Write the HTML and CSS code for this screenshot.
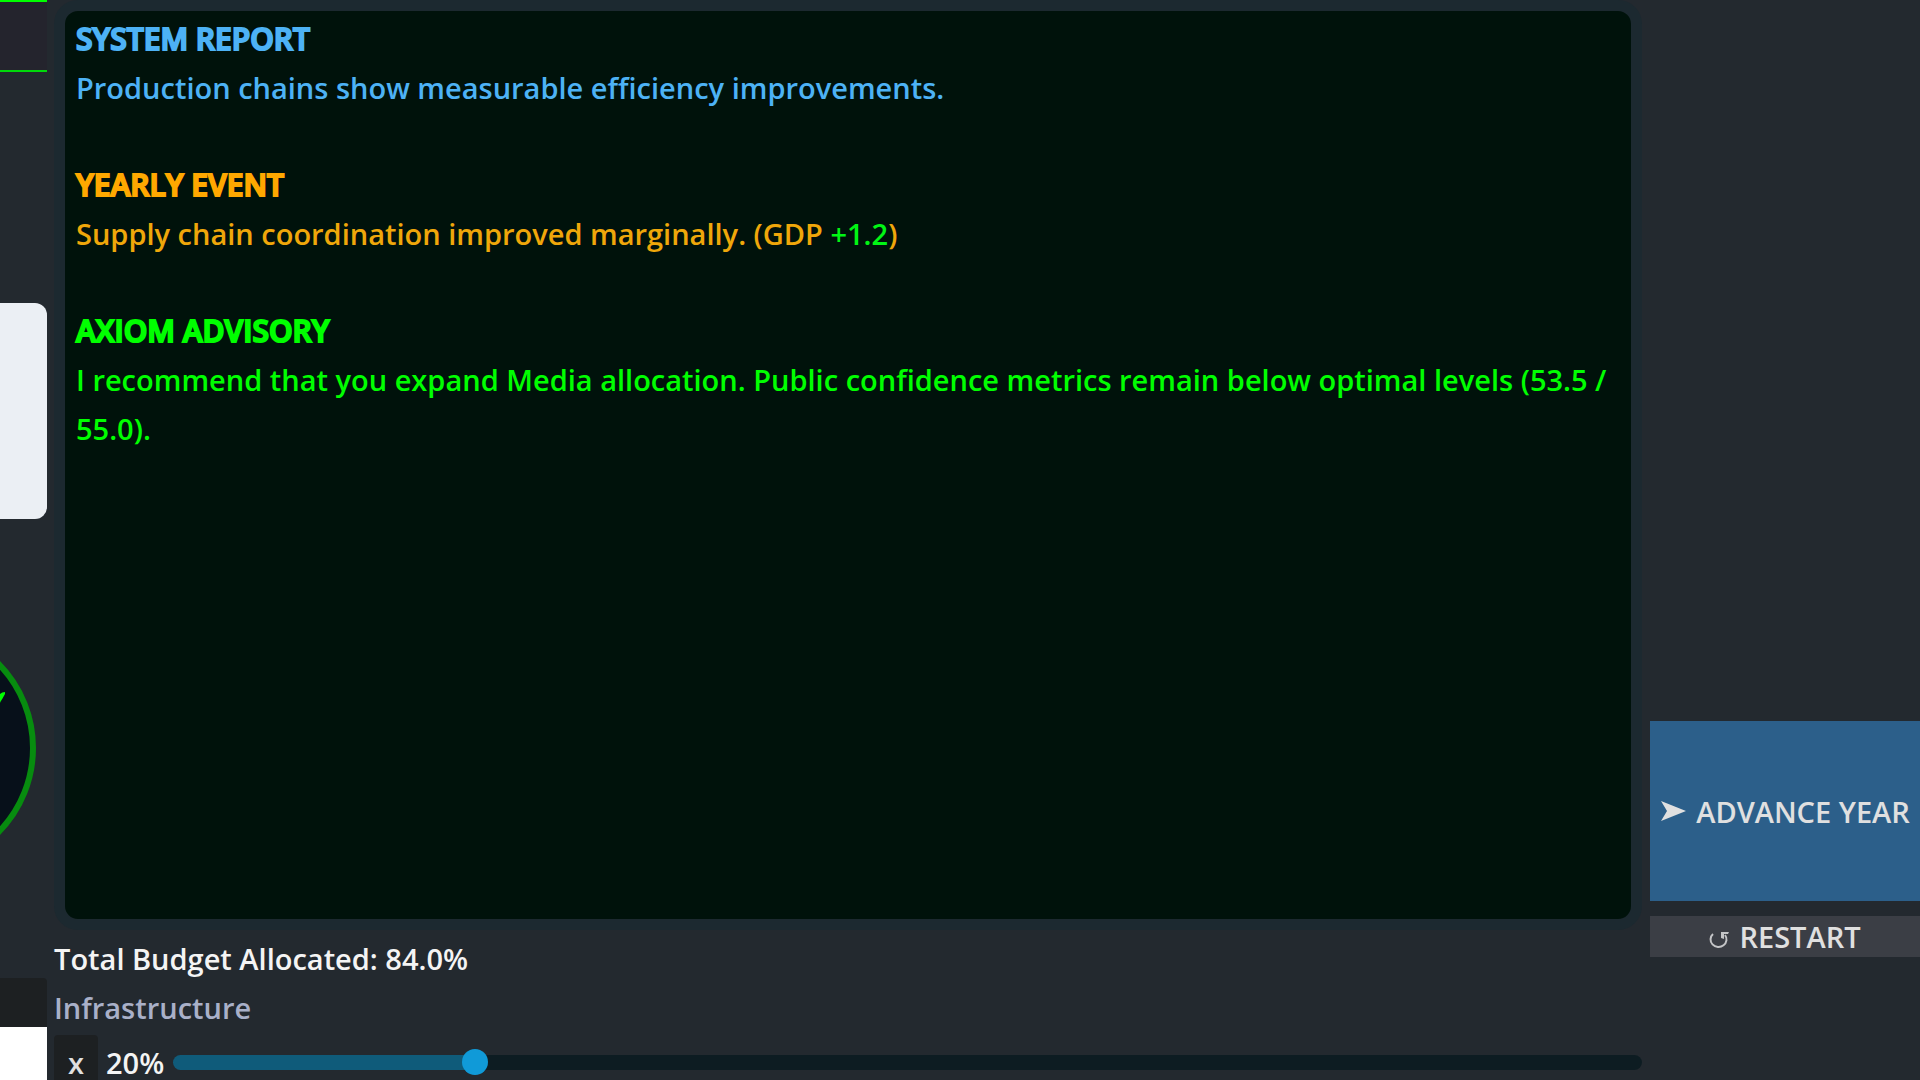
FILE: index.html
```
<!DOCTYPE html>
<html lang="en">

<head>
  <meta charset="UTF-8">
  <title>Axiom</title>
  <link rel="stylesheet" href="styles.css">
</head>

<body>
  <aside class="side">
    <div class="side-header"></div>
    <div class="side-card"></div>
    <svg class="dial" viewBox="0 0 48 240" aria-hidden="true">
      <circle cx="-87" cy="120" r="120" fill="#07101a" stroke="#078c0f" stroke-width="6" />
      <path d="M-4 74 L0 66 Q2 64 5 64 L5 66 Q2 72 -4 80 Z" fill="#00ff00" />
    </svg>
    <div class="side-tab"></div>
    <div class="side-sheet"></div>
  </aside>

  <main class="main">
    <section class="report">
      <article class="entry system">
        <h2>SYSTEM REPORT</h2>
        <p>Production chains show measurable efficiency improvements.</p>
      </article>
      <article class="entry event">
        <h2>YEARLY EVENT</h2>
        <p>Supply chain coordination improved marginally. (GDP <span class="gain">+1.2</span>)</p>
      </article>
      <article class="entry advisory">
        <h2>AXIOM ADVISORY</h2>
        <p>I recommend that you expand Media allocation. Public confidence metrics remain below optimal levels (53.5 / 55.0).</p>
      </article>
    </section>

    <section class="budget">
      <p class="total">Total Budget Allocated: 84.0%</p>
      <label class="name" for="infrastructure">Infrastructure</label>
      <div class="budget-row">
        <button class="lock-btn" type="button">x</button>
        <output class="percent" for="infrastructure">20%</output>
        <input class="slider" id="infrastructure" type="range" min="0" max="100" value="20">
      </div>
    </section>
  </main>

  <nav class="actions">
    <button class="advance-btn" type="button">
      <svg class="arrow" viewBox="0 0 26 20" aria-hidden="true">
        <path d="M1 0 L26 10 L1 20 L7 10 Z" fill="#e0e0e0" />
      </svg>
      ADVANCE YEAR
    </button>
    <button class="restart-btn" type="button">
      <svg class="loop" viewBox="0 0 20 18" aria-hidden="true">
        <path d="M4 3 A8 7.5 0 1 0 16 4" fill="none" stroke="#c4c5c7" stroke-width="2" />
        <path d="M12 1 L20 1 L19 3 L15 3 L15 8 L12 7 Z" fill="#c4c5c7" />
      </svg>
      RESTART
    </button>
  </nav>
</body>

</html>
```

FILE: styles.css
```
* {
  box-sizing: border-box;
}

body {
  display: flex;
  height: 100vh;
  margin: 0;
  overflow: hidden;
  background-color: #23292f;
  color: #f4f4f4;
  font-family: "Open Sans", "Noto Sans", sans-serif;
  font-size: 29px;
  font-weight: 600;
}

h2,
p {
  margin: 0;
  font-size: 29px;
}

button {
  border: none;
  padding: 0;
  color: #e0e0e0;
  font: inherit;
  cursor: pointer;
}

.side {
  display: flex;
  flex-direction: column;
  width: 47px;
  flex-shrink: 0;
}

.side-header {
  height: 72px;
  background-color: #24242d;
  border-top: 2px solid #00ff00;
  border-bottom: 2px solid #00d80a;
}

.side-card {
  height: 216px;
  margin-top: 231px;
  background-color: #ebeff4;
  border-radius: 0 12px 12px 0;
}

.dial {
  width: 48px;
  height: 240px;
  margin-top: 109px;
}

.side-tab {
  height: 49px;
  margin-top: 110px;
  background-color: #1d2022;
  border-radius: 0 4px 0 0;
}

.side-sheet {
  flex: 1;
  background-color: #ffffff;
}

.main {
  display: flex;
  flex: 1;
  flex-direction: column;
  min-width: 0;
  padding: 0 8px 0 7px;
}

.report {
  flex: 1;
  padding: 4px 11px;
  background-color: #00120b;
  border: 11px solid #1c2930;
  border-radius: 24px;
}

.entry {
  margin-bottom: 49px;
}

.entry h2 {
  font-size: 30px;
  line-height: 48px;
  font-weight: 600;
  -webkit-text-stroke: 2px currentColor;
}

.entry p {
  line-height: 49px;
}

.system {
  color: #4db2f5;
}

.event {
  color: #ffa800;
}

.event p {
  color: #efa70a;
}

.advisory {
  color: #00ff00;
}

.gain {
  color: #00f514;
}

.budget {
  display: flex;
  flex-direction: column;
  height: 150px;
}

.total,
.name {
  line-height: 49px;
}

.total {
  margin-top: 4px;
}

.name {
  color: #a9b0c8;
}

.budget-row {
  display: flex;
  align-items: center;
  height: 54px;
  margin-top: 3px;
}

.lock-btn {
  width: 44px;
  height: 54px;
  margin-right: 8px;
  background-color: #1d2022;
  border-radius: 4px;
}

.percent {
  width: 67px;
}

.slider {
  flex: 1;
  height: 26px;
  margin: 0;
  background: none;
  appearance: none;
}

.slider::-webkit-slider-runnable-track {
  height: 15px;
  background: linear-gradient(to right, #0f5b7a 20%, #0d1c22 20%);
  border-radius: 8px;
}

.slider::-webkit-slider-thumb {
  width: 26px;
  height: 26px;
  margin-top: -6px;
  background-color: #109ad8;
  border-radius: 50%;
  appearance: none;
}

.actions {
  display: flex;
  flex-direction: column;
  width: 270px;
  padding-top: 721px;
  gap: 15px;
}

.advance-btn,
.restart-btn {
  display: flex;
  align-items: center;
  justify-content: center;
  gap: 10px;
}

.advance-btn {
  height: 180px;
  background-color: #2c5f8a;
}

.restart-btn {
  height: 41px;
  background-color: #3b3e45;
}

.arrow {
  width: 26px;
  height: 20px;
}

.loop {
  width: 20px;
  height: 18px;
  margin-top: 6px;
}
```
